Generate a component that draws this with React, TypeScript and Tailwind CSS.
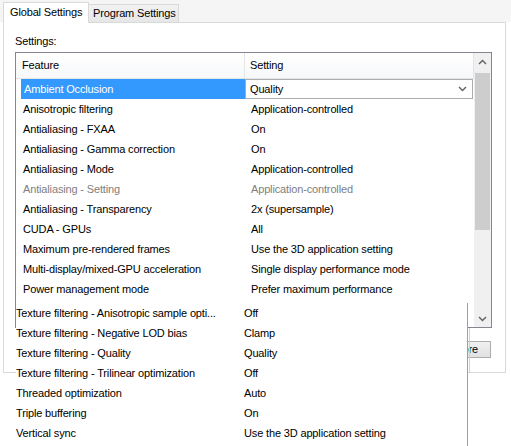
import React from "react";

type Row = { feature: string; value: string; disabled?: boolean };

const LIST_ROWS: Row[] = [
  { feature: "Anisotropic filtering", value: "Application-controlled" },
  { feature: "Antialiasing - FXAA", value: "On" },
  { feature: "Antialiasing - Gamma correction", value: "On" },
  { feature: "Antialiasing - Mode", value: "Application-controlled" },
  { feature: "Antialiasing - Setting", value: "Application-controlled", disabled: true },
  { feature: "Antialiasing - Transparency", value: "2x (supersample)" },
  { feature: "CUDA - GPUs", value: "All" },
  { feature: "Maximum pre-rendered frames", value: "Use the 3D application setting" },
  { feature: "Multi-display/mixed-GPU acceleration", value: "Single display performance mode" },
  { feature: "Power management mode", value: "Prefer maximum performance" },
];

const POPUP_ROWS: Row[] = [
  { feature: "Texture filtering - Anisotropic sample opti...", value: "Off" },
  { feature: "Texture filtering - Negative LOD bias", value: "Clamp" },
  { feature: "Texture filtering - Quality", value: "Quality" },
  { feature: "Texture filtering - Trilinear optimization", value: "Off" },
  { feature: "Threaded optimization", value: "Auto" },
  { feature: "Triple buffering", value: "On" },
  { feature: "Vertical sync", value: "Use the 3D application setting" },
];

function Chevron({ up = false }: { up?: boolean }) {
  return (
    <svg width="9" height="6" viewBox="0 0 9 6" aria-hidden>
      <path
        d={up ? "M1 5 L4.5 1.5 L8 5" : "M1 1 L4.5 4.5 L8 1"}
        fill="none"
        stroke="#606060"
        strokeWidth="1.4"
      />
    </svg>
  );
}

function Scrollbar() {
  return (
    <div className="flex w-[17px] flex-col bg-[#f0f0f0]">
      <div className="flex h-[17px] items-center justify-center">
        <Chevron up />
      </div>
      <div className="mx-px mt-[3px] h-[157px] bg-[#cdcdcd]" />
      <div className="flex-1" />
      <div className="flex h-[17px] items-center justify-center">
        <Chevron />
      </div>
    </div>
  );
}

export default function App() {
  return (
    <div className="relative h-[446px] w-[511px] overflow-hidden bg-white font-['Liberation_Sans',Arial,sans-serif] text-[11px] tracking-[-0.15px] text-black">
      {/* tab strip */}
      <div className="flex h-[22px] items-end bg-[#f5f5f5] pl-[3px]">
        <div className="relative z-10 -mb-px flex h-[21px] w-[86px] items-center border border-b-0 border-[#d9d9d9] bg-white pb-[2px] pl-[6px]">
          Global Settings
        </div>
        <div className="flex h-[18px] w-[90px] items-center border border-b-0 border-l-0 border-[#d9d9d9] bg-gradient-to-b from-[#f2f2f2] to-[#e6e6e6] pl-[4px]">
          Program Settings
        </div>
      </div>

      {/* tab panel */}
      <div className="ml-[3px] flex h-[351px] w-[503px] flex-col border border-[#d9d9d9] bg-white pl-[11px]">
        <div className="mt-[12px] mb-[4px] h-[13px] leading-[13px]">Settings:</div>

        <div className="flex h-[276px] w-[477px] border border-[#828790]">
          <div className="flex w-[458px] flex-col overflow-hidden">
            <div className="flex h-[26px] shrink-0 border-b border-[#e5e5e5] bg-gradient-to-b from-white to-[#f7f8fa]">
              <div className="flex w-[229px] items-center border-r border-[#e5e5e5] pl-[6px]">Feature</div>
              <div className="flex flex-1 items-center border-r border-[#dde6ef] pl-[5px]">Setting</div>
            </div>

            <div className="flex h-[20px] shrink-0">
              <div className="flex w-[229px] pl-[5px]">
                <div className="flex flex-1 items-center bg-[#3399ff] pl-[3px] text-white">Ambient Occlusion</div>
              </div>
              <div className="flex w-[228px] items-center justify-between border border-[#acacac] pl-[4px] pr-[5px]">
                <span>Quality</span>
                <Chevron />
              </div>
            </div>

            {LIST_ROWS.map((r) => (
              <div
                key={r.feature}
                className={`flex h-[20px] shrink-0 items-center ${r.disabled ? "text-[#808080]" : ""}`}
              >
                <div className="w-[229px] pl-[7px]">{r.feature}</div>
                <div className="pl-[6px]">{r.value}</div>
              </div>
            ))}
          </div>
          <Scrollbar />
        </div>

        <div className="flex justify-end pr-[14px]">
          <button
            type="button"
            className="mt-[13px] flex h-[17px] items-center border border-[#adadad] bg-gradient-to-b from-[#f0f0f0] to-[#e1e1e1] pl-[10px] pr-[12px]"
          >
            Restore
          </button>
        </div>
      </div>

      {/* dropdown popup drawn over the panel */}
      <div className="absolute left-[16px] top-[303px] z-20 flex h-[143px] w-[452px] flex-col border-r border-[#a0a0a0] bg-white">
        {POPUP_ROWS.map((r) => (
          <div key={r.feature} className="flex h-[20px] shrink-0 items-center">
            <div className="w-[228px] whitespace-nowrap">{r.feature}</div>
            <div>{r.value}</div>
          </div>
        ))}
      </div>
      <div className="absolute left-[469px] top-[328px] z-20 h-[45px] w-px bg-[#d0d0d0]" />
    </div>
  );
}
